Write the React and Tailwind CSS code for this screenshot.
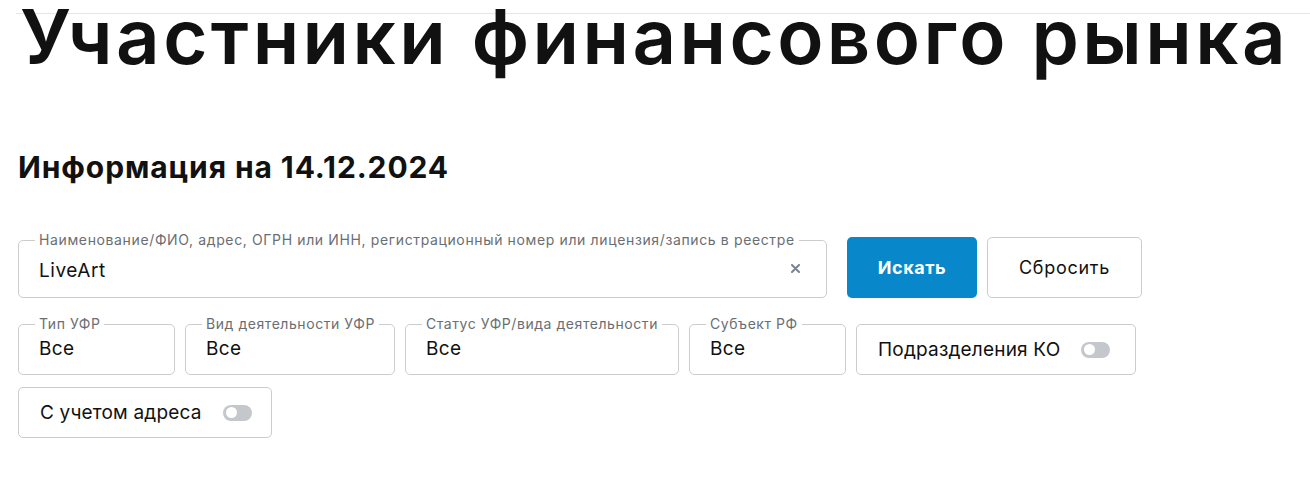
import React from "react";

function Toggle() {
  return (
    <span className="relative inline-flex h-[16px] w-[29px] shrink-0 items-center rounded-full bg-[#c4c7cc]">
      <span className="ml-[3px] h-[11px] w-[11px] rounded-full bg-white" />
    </span>
  );
}

function SelectField({ label, value, width }) {
  return (
    <fieldset className={`${width} h-[58px] min-w-0 shrink-0 rounded-[5px] border border-[#cccccc] px-5`}>
      <legend className="-ml-[4px] whitespace-nowrap px-[4px] text-[14px] leading-[14px] tracking-[0.04em] text-[#6a6e73]">{label}</legend>
      <div className="pt-[6px] text-[19px] leading-[24px] tracking-[0.02em] text-[#111111]">{value}</div>
    </fieldset>
  );
}

function ToggleBox({ label, width }) {
  return (
    <div className={`${width} flex h-[51px] shrink-0 items-center gap-[21px] rounded-[5px] border border-[#cccccc] pl-[21px]`}>
      <span className="whitespace-nowrap text-[19px] leading-[24px] tracking-[0.01em] text-[#111111]">{label}</span>
      <Toggle />
    </div>
  );
}

export default function App() {
  return (
    <div className="min-h-screen bg-white font-['Inter','Noto_Sans',sans-serif] text-[#111111]">
      <div className="pl-[18px] pt-[13px]">
        <div className="-ml-[2px] border-t border-[#e6e6e6]" />
        <h1 className="-mt-[13px] ml-[2px] whitespace-nowrap text-[76px] font-semibold leading-[70px] tracking-[0.045em]">
          Участники финансового рынка
        </h1>
        <h2 className="mt-[79px] whitespace-nowrap text-[30px] font-bold leading-[34px] tracking-[0.03em]">Информация на 14.12.2024</h2>

        <div className="mt-[49px] flex items-end">
          <fieldset className="h-[65px] w-[809px] min-w-0 shrink-0 rounded-[5px] border border-[#cccccc] pl-5 pr-[26px]">
            <legend className="-ml-[4px] whitespace-nowrap px-[4px] text-[14px] leading-[14px] tracking-[0.045em] text-[#6a6e73]">
              Наименование/ФИО, адрес, ОГРН или ИНН, регистрационный номер или лицензия/запись в реестре
            </legend>
            <div className="flex items-start justify-between pt-[12px]">
              <span className="text-[19px] leading-[24px] tracking-[0.03em] text-[#111111]">LiveArt</span>
              <svg className="mt-[5px]" width="9" height="9" viewBox="0 0 9 9" fill="none">
                <path d="M1 1L8 8M8 1L1 8" stroke="#7b8290" strokeWidth="2" strokeLinecap="round" />
              </svg>
            </div>
          </fieldset>
          <button className="ml-[20px] h-[61px] w-[130px] shrink-0 rounded-[5px] bg-[#0887ca] text-[18px] font-bold tracking-[0.03em] text-white">
            Искать
          </button>
          <button className="ml-[10px] h-[61px] w-[155px] shrink-0 rounded-[5px] border border-[#cccccc] bg-white text-[18px] tracking-[0.04em] text-[#111111]">
            Сбросить
          </button>
        </div>

        <div className="mt-[19px] flex items-end gap-[10px]">
          <SelectField label="Тип УФР" value="Все" width="w-[157px]" />
          <SelectField label="Вид деятельности УФР" value="Все" width="w-[210px]" />
          <SelectField label="Статус УФР/вида деятельности" value="Все" width="w-[274px]" />
          <SelectField label="Субъект РФ" value="Все" width="w-[157px]" />
          <ToggleBox label="Подразделения КО" width="w-[280px]" />
        </div>

        <div className="mt-[12px] flex">
          <ToggleBox label="С учетом адреса" width="w-[254px]" />
        </div>
      </div>
    </div>
  );
}
